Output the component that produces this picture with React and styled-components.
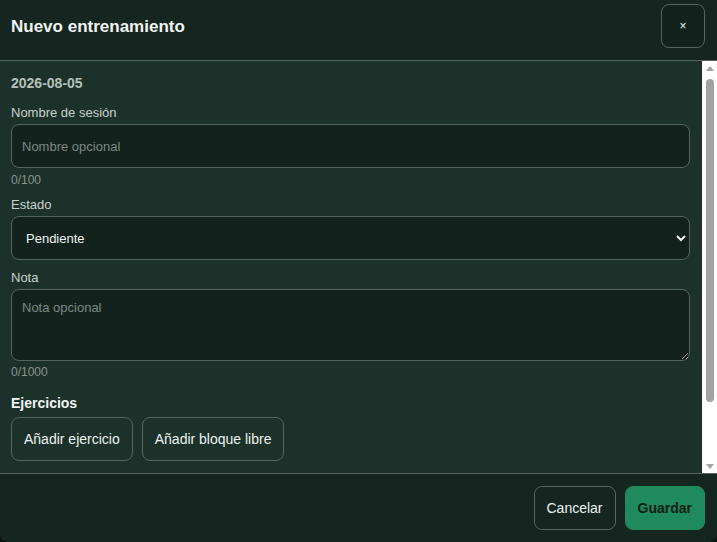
import React, { useState } from 'react';
import styled, { createGlobalStyle } from 'styled-components';

const GlobalStyle = createGlobalStyle`
  html, body {
    margin: 0;
    padding: 0;
    background: #0b1611;
    font-family: 'Liberation Sans', Arial, sans-serif;
  }
  * { box-sizing: border-box; }
`;

const Modal = styled.div`
  width: 717px;
  height: 542px;
  display: flex;
  flex-direction: column;
  background: #1b3129;
  color: #e6ece9;
  border-radius: 0 0 9px 9px;
  overflow: hidden;
`;

const Header = styled.header`
  height: 61px;
  flex: none;
  display: flex;
  align-items: center;
  justify-content: space-between;
  padding: 0 12px 0 11px;
  background: #152620;
  border-bottom: 1px solid #56665f;
`;

const Title = styled.h2`
  margin: -6px 0 0;
  font-size: 17px;
  font-weight: 700;
  color: #f1f4f2;
`;

const CloseButton = styled.button`
  width: 44px;
  height: 44px;
  margin-top: -9px;
  border: 1px solid #56665f;
  border-radius: 8px;
  background: #13221c;
  color: #f1f4f2;
  font-size: 12px;
  font-family: inherit;
  cursor: pointer;
`;

const Body = styled.div`
  flex: 1;
  min-height: 0;
  display: flex;
`;

const Content = styled.div`
  flex: 1;
  min-width: 0;
  overflow-y: auto;
  padding: 14px 12px 0 11px;
  scrollbar-width: none;
`;

/* classic scrollbar, drawn since the page hides native ones */
const ScrollBar = styled.div`
  width: 15px;
  flex: none;
  display: flex;
  flex-direction: column;
  background: #ffffff;
`;

const ScrollArrow = styled.div`
  height: 14px;
  flex: none;
  display: flex;
  align-items: center;
  justify-content: center;

  &::before {
    content: '';
    border-left: 4px solid transparent;
    border-right: 4px solid transparent;
    ${(p) => (p.$down ? 'border-top' : 'border-bottom')}: 5px solid #a3a3a3;
  }
`;

const ScrollTrack = styled.div`
  flex: 1;
  padding: 4px 3px 0 4px;
`;

const ScrollThumb = styled.div`
  height: 323px;
  border-radius: 4px;
  background: #a3a3a3;
`;

const DateText = styled.div`
  font-size: 14px;
  font-weight: 700;
  line-height: 17px;
  color: #b6c0bb;
  margin-bottom: 13px;
`;

const Field = styled.div`
  margin-bottom: ${(p) => p.$gap}px;
`;

const Label = styled.label`
  display: block;
  font-size: 13px;
  line-height: 15px;
  color: #c9d1cd;
  margin-bottom: 4px;
`;

const fieldBase = `
  display: block;
  width: 100%;
  border: 1px solid #55655e;
  border-radius: 8px;
  background: #13221c;
  color: #eef2f0;
  font-family: inherit;
  font-size: 13px;
  padding: 0 10px;
  margin: 0;
  outline: none;
  &::placeholder { color: #7d8984; }
`;

const Input = styled.input`
  ${fieldBase}
  height: 44px;
`;

const Select = styled.select`
  ${fieldBase}
  height: 44px;
  padding: 0 6px 0 10px;
  color-scheme: dark;
`;

const TextArea = styled.textarea`
  ${fieldBase}
  height: 72px;
  padding: 10px;
  resize: vertical;
`;

const Counter = styled.div`
  font-size: 12px;
  line-height: 14px;
  color: #8a9590;
  margin-top: ${(p) => p.$top}px;
`;

const SectionTitle = styled.div`
  font-size: 14px;
  font-weight: 700;
  line-height: 17px;
  color: #f1f4f2;
  margin-bottom: 5px;
`;

const ButtonRow = styled.div`
  display: flex;
  gap: 9px;
  padding-bottom: 12px;
`;

const Button = styled.button`
  height: 44px;
  padding: 0 12px;
  border-radius: 8px;
  font-family: inherit;
  font-size: 14px;
  cursor: pointer;
  border: 1px solid ${(p) => (p.$primary ? '#1f8a5b' : '#56665f')};
  background: ${(p) => (p.$primary ? '#1f8a5b' : 'transparent')};
  color: ${(p) => (p.$primary ? '#102019' : '#eef2f0')};
  font-weight: ${(p) => (p.$primary ? 700 : 400)};
`;

const Footer = styled.footer`
  height: 69px;
  flex: none;
  display: flex;
  align-items: center;
  justify-content: flex-end;
  gap: 9px;
  padding: 0 12px;
  background: #152620;
  border-top: 1px solid #56665f;
`;

export default function App() {
  const [name, setName] = useState('');
  const [note, setNote] = useState('');

  return (
    <>
      <GlobalStyle />
      <Modal>
        <Header>
          <Title>Nuevo entrenamiento</Title>
          <CloseButton aria-label="Cerrar">×</CloseButton>
        </Header>
        <Body>
          <Content>
            <DateText>2026-08-05</DateText>
            <Field $gap={10}>
              <Label>Nombre de sesión</Label>
              <Input
                placeholder="Nombre opcional"
                value={name}
                maxLength={100}
                onChange={(e) => setName(e.target.value)}
              />
              <Counter $top={5}>{name.length}/100</Counter>
            </Field>
            <Field $gap={10}>
              <Label>Estado</Label>
              <Select defaultValue="pendiente">
                <option value="pendiente">Pendiente</option>
                <option value="completado">Completado</option>
              </Select>
            </Field>
            <Field $gap={16}>
              <Label>Nota</Label>
              <TextArea
                placeholder="Nota opcional"
                value={note}
                maxLength={1000}
                onChange={(e) => setNote(e.target.value)}
              />
              <Counter $top={4}>{note.length}/1000</Counter>
            </Field>
            <SectionTitle>Ejercicios</SectionTitle>
            <ButtonRow>
              <Button>Añadir ejercicio</Button>
              <Button>Añadir bloque libre</Button>
            </ButtonRow>
          </Content>
          <ScrollBar aria-hidden="true">
            <ScrollArrow />
            <ScrollTrack>
              <ScrollThumb />
            </ScrollTrack>
            <ScrollArrow $down />
          </ScrollBar>
        </Body>
        <Footer>
          <Button>Cancelar</Button>
          <Button $primary>Guardar</Button>
        </Footer>
      </Modal>
    </>
  );
}
